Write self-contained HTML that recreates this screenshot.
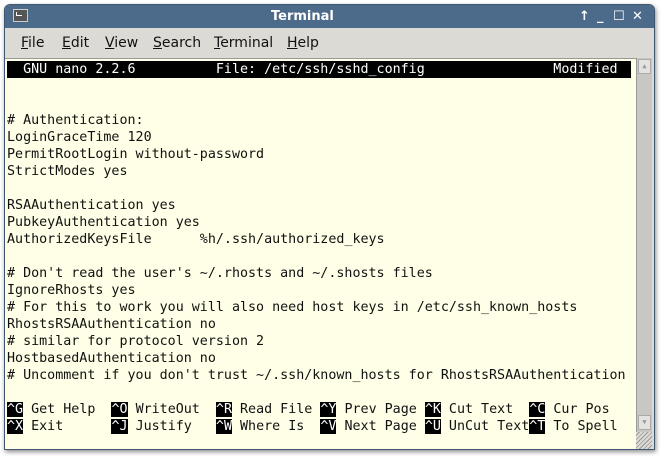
<!DOCTYPE html>
<html><head><meta charset="utf-8">
<style>
*{margin:0;padding:0;box-sizing:border-box}
body{width:662px;height:462px;background:#fff;position:relative;overflow:hidden;font-family:"DejaVu Sans Mono","Liberation Mono",monospace}
.win{position:absolute;left:4px;top:4px;width:651px;height:446px;border-radius:6px 6px 0 0;background:#dcdad5;box-shadow:1px 2px 5px rgba(0,0,0,.45);overflow:hidden;border:1px solid #3e5670}
.title{position:absolute;left:0;top:0;width:100%;height:23px;background:#4c6a89;color:#fff;font:bold 13px "DejaVu Sans","Liberation Sans",sans-serif;line-height:23px}
.title .t{position:absolute;left:266px;top:0}
.ticon{position:absolute;left:8px;top:4px;width:15px;height:13px;background:#555;border:1px solid #ccc}
.ticon:after{content:"";position:absolute;left:2px;top:2px;width:5px;height:3px;border-left:1px solid #fff;border-bottom:1px solid #fff}
.b{position:absolute;top:0;font-size:13px}
.menu{position:absolute;left:0;top:23px;width:100%;height:30px;font:14px "DejaVu Sans","Liberation Sans",sans-serif;color:#111;line-height:30px}
.menu span{position:absolute;top:0}
.menu u{text-decoration:underline}
.term{position:absolute;left:0;top:53px;width:631px;height:392px;background:#fffee6;border-top:1px solid #999}
pre{position:absolute;left:2px;top:1px;font-family:"DejaVu Sans Mono",monospace;font-size:13.35px;line-height:17px;color:#111}
.hdr{position:absolute;left:2px;top:2px;width:624px;height:17px;background:#000;overflow:hidden}
.hdr pre{left:0;top:0;color:#fff}
pre i{font-style:normal;background:#000;color:#fff}
.sb{position:absolute;left:631px;top:53px;width:16px;height:374px;background:#c9c7c2;border-left:1px solid #999}
.ar{position:absolute;left:1px;width:13px;height:15px;background:#e4e2de;border:1px solid #aaa;font-size:7px;color:#999;text-align:center;line-height:13px}
.grip{position:absolute;left:631px;top:427px;width:16px;height:18px;background:repeating-linear-gradient(135deg,#dcdad5 0 2px,#9a9893 2px 3px)}
</style></head><body>
<div class="win">
 <div class="title"><div class="ticon"></div><span class="t">Terminal</span>
  <span class="b" style="left:574px">↑</span><span class="b" style="left:592px">_</span><span class="b" style="left:608px">☐</span><span class="b" style="left:627px">✕</span></div>
 <div class="menu">
  <span style="left:16px"><u>F</u>ile</span>
  <span style="left:57px"><u>E</u>dit</span>
  <span style="left:100px"><u>V</u>iew</span>
  <span style="left:148px"><u>S</u>earch</span>
  <span style="left:209px"><u>T</u>erminal</span>
  <span style="left:282px"><u>H</u>elp</span>
 </div>
 <div class="term">
  <div class="hdr"><pre>  GNU nano 2.2.6          File: /etc/ssh/sshd_config                Modified</pre></div>
<pre style="top:53px"># Authentication:
LoginGraceTime 120
PermitRootLogin without-password
StrictModes yes

RSAAuthentication yes
PubkeyAuthentication yes
AuthorizedKeysFile      %h/.ssh/authorized_keys

# Don't read the user's ~/.rhosts and ~/.shosts files
IgnoreRhosts yes
# For this to work you will also need host keys in /etc/ssh_known_hosts
RhostsRSAAuthentication no
# similar for protocol version 2
HostbasedAuthentication no
# Uncomment if you don't trust ~/.ssh/known_hosts for RhostsRSAAuthentication</pre>
<pre style="top:342px"><i>^G</i> Get Help  <i>^O</i> WriteOut  <i>^R</i> Read File <i>^Y</i> Prev Page <i>^K</i> Cut Text  <i>^C</i> Cur Pos
<i>^X</i> Exit      <i>^J</i> Justify   <i>^W</i> Where Is  <i>^V</i> Next Page <i>^U</i> UnCut Text<i>^T</i> To Spell</pre>
 </div>
 <div class="sb"><div class="ar" style="top:1px">▲</div><div class="ar" style="top:357px">▼</div></div>
 <div class="grip"></div>
</div>
</body></html>
